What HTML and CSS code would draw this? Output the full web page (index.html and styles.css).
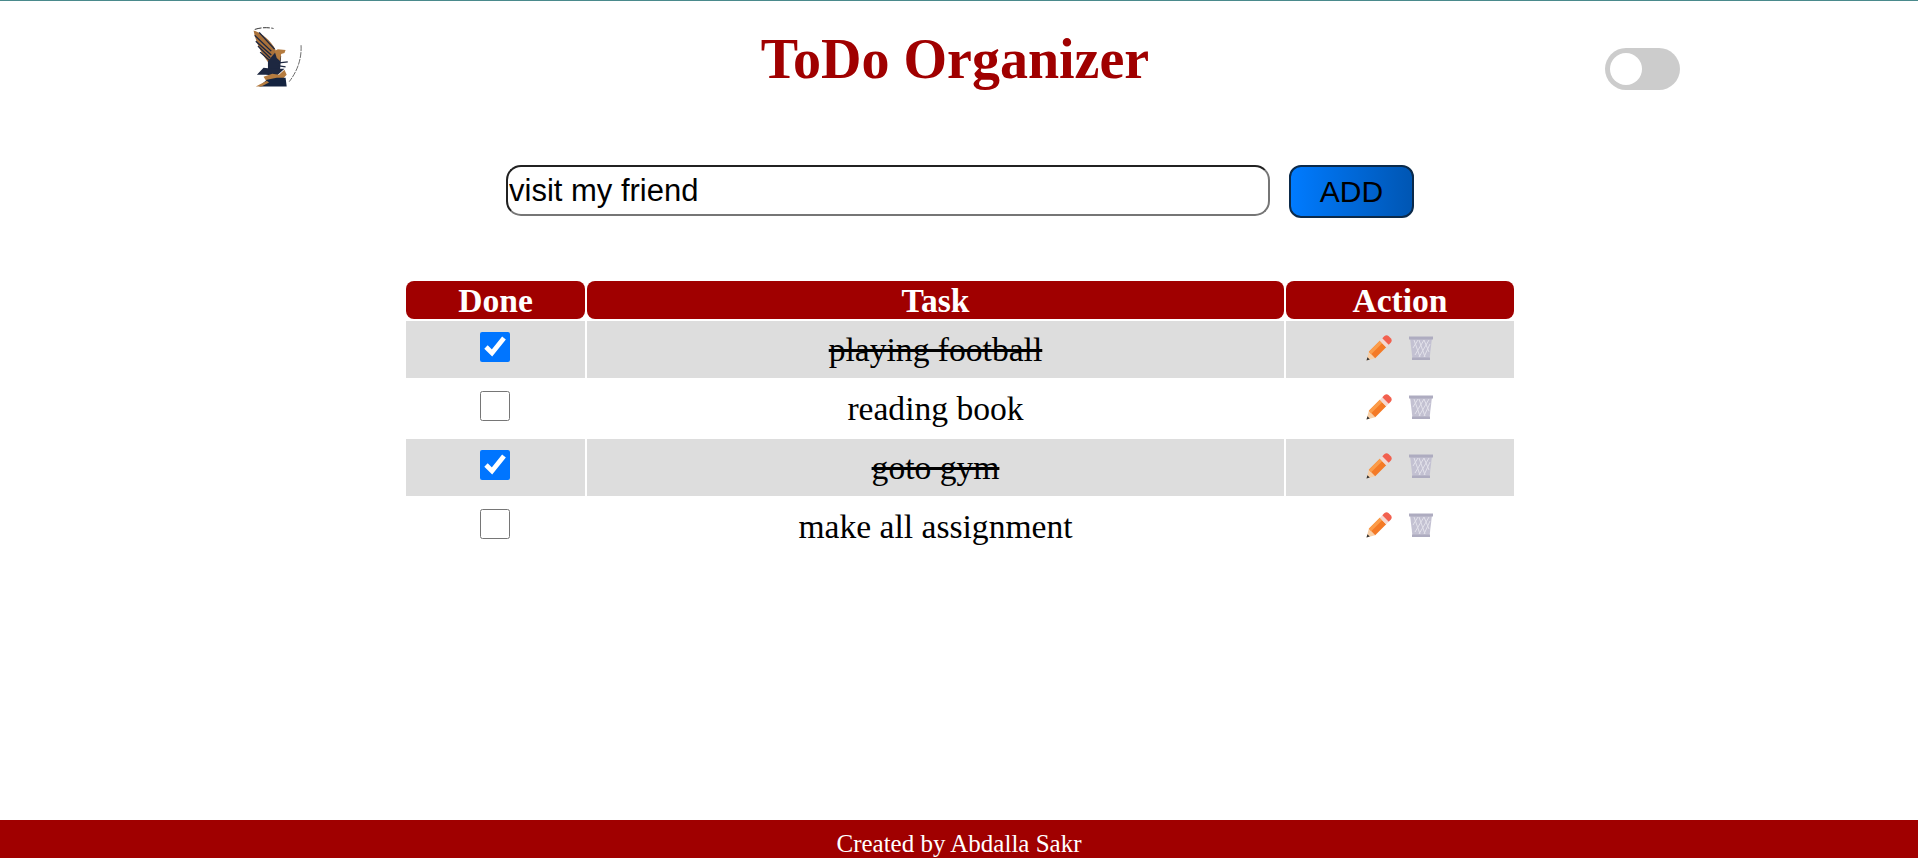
FILE: index.html
```html
<!DOCTYPE html>
<html lang="en">
<head>
    <meta charset="UTF-8">
    <meta name="viewport" content="width=device-width, initial-scale=1.0">
    <title>ToDo Organizer</title>
    <link rel="stylesheet" href="styles.css">
</head>
<body>
    <svg width="0" height="0" class="defs">
        <symbol id="pencil" viewBox="0 0 26 26">
            <path d="M.5 25.500 L2.800 16.800 L9.200 23.200 Z" fill="#f8cfa6"/>
            <path d="M.5 25.500 L1.400 22.200 L3.800 24.600 Z" fill="#333"/>
            <path d="M2.800 16.800 L13.800 5.800 L20.200 12.200 L9.200 23.200 Z" fill="#f47a26"/>
            <path d="M2.800 16.800 L13.800 5.800 L16.200 8.200 L5.200 19.200 Z" fill="#fb9c4a"/>
            <path d="M13.800 5.800 L16.300 3.300 L22.700 9.700 L20.200 12.200 Z" fill="#f4d8d2"/>
            <path d="M16.300 3.300 L18.500 1.100 Q20.500 -.4 22.500 1 L25 3.500 Q26.400 5.500 24.900 7.500 L22.700 9.700 Z" fill="#f2604f"/>
        </symbol>
        <symbol id="trash" viewBox="0 0 26 26">
            <path d="M2 3 L24 3 L21.500 24 L4.500 24 Z" fill="#c3c1d2"/>
            <path d="M6 5 L12 22 M11 5 L17 22 M16 5 L21 17 M21 5 L11 22 M16 5 L7 20 M10 5 L5 13 M22 9 L16 22" stroke="#e2e1ea" stroke-width="1" fill="none"/>
            <path d="M1 1.500 H25 V4.500 H1 Z" fill="#aeacc0"/>
            <path d="M4 22.500 H22 V25 H4 Z" fill="#aeacc0"/>
        </symbol>
    </svg>

    <header class="top">
        <svg class="logo" viewBox="0 0 66 66" role="img" aria-label="logo">
            <path d="M15 4 Q24 1 34 3" stroke="#333" stroke-width="1" fill="none" stroke-dasharray="7 1.500"/>
            <path d="M62 20 Q63 40 50 57" stroke="#444" stroke-width=".8" fill="none" stroke-dasharray="6 1"/>
            <g transform="translate(-3 0) scale(1.120 1)">
                <path d="M15 5 C22 8 30 14 35 25 L36 34 L28 37 C22 28 17 18 15 5 Z" fill="#a9713a"/>
                <path d="M16 10 L31 26 M17 16 L31 30 M19 21 L30 33 M21 27 L29 35 M20 7 L34 24" stroke="#1d2740" stroke-width="1.300" fill="none"/>
                <path d="M28 36 L35 27 L40 31 L39 45 L28 47 Z" fill="#1d2740"/>
                <path d="M34 26 L37 24 L44 25 L43 28 L40 29 L39 36 L36 33 Z" fill="#b57c40"/>
                <path d="M38 38 L46 37 M38 41 L44 42" stroke="#1d2740" stroke-width="1.200"/>
                <path d="M18 50 L24 43 L32 44 L43 44 L36 51 L26 50 Z" fill="#1d2740"/>
                <path d="M24 52 L32 49 L38 50 L43 45 L45 50 L39 57 L27 57 Z" fill="#b57c40"/>
                <path d="M27 55 L36 53 L44 53 L45 62 L20 62 Z" fill="#14233f"/>
                <path d="M17 62 L27 56 L29 58 L22 62 Z" fill="#b57c40"/>
            </g>
        </svg>
        <h1 class="title">ToDo Organizer</h1>
        <label class="switch">
            <input type="checkbox" class="switch-input">
            <span class="knob"></span>
        </label>
    </header>

    <form class="add-form">
        <input type="text" class="task-input" value="visit my friend">
        <button type="button" class="add-btn">ADD</button>
    </form>

    <table class="tasks">
        <thead>
            <tr>
                <th class="col-done">Done</th>
                <th>Task</th>
                <th class="col-action">Action</th>
            </tr>
        </thead>
        <tbody>
            <tr class="striped">
                <td><input type="checkbox" class="check" checked></td>
                <td class="finished">playing football</td>
                <td><svg class="icon"><use href="#pencil"/></svg><svg class="icon"><use href="#trash"/></svg></td>
            </tr>
            <tr>
                <td><input type="checkbox" class="check"></td>
                <td>reading book</td>
                <td><svg class="icon"><use href="#pencil"/></svg><svg class="icon"><use href="#trash"/></svg></td>
            </tr>
            <tr class="striped">
                <td><input type="checkbox" class="check" checked></td>
                <td class="finished">goto gym</td>
                <td><svg class="icon"><use href="#pencil"/></svg><svg class="icon"><use href="#trash"/></svg></td>
            </tr>
            <tr>
                <td><input type="checkbox" class="check"></td>
                <td>make all assignment</td>
                <td><svg class="icon"><use href="#pencil"/></svg><svg class="icon"><use href="#trash"/></svg></td>
            </tr>
        </tbody>
    </table>

    <footer class="foot">Created by Abdalla Sakr</footer>
</body>
</html>
```

FILE: styles.css
```css
html, body {
    height: 100%;
}
body {
    margin: 0;
    box-sizing: border-box;
    display: flex;
    flex-direction: column;
    border-top: 1px solid #4a8a8c;
    background-color: #fff;
    font-family: "Liberation Serif", serif;
    overflow: hidden;
}
.defs {
    display: none;
}
.top {
    display: flex;
    justify-content: space-between;
    align-items: flex-start;
    padding: 24px 238px 0 240px;
}
.logo {
    width: 65px;
    height: 66px;
}
.title {
    margin: 0;
    color: #a00000;
    font-size: 56px;
    line-height: 68px;
    font-weight: bold;
}
.switch {
    position: relative;
    display: block;
    width: 75px;
    height: 42px;
    margin-top: 23px;
    border-radius: 21px;
    background-color: #ccc;
}
.switch-input {
    display: none;
}
.knob {
    position: absolute;
    left: 5px;
    top: 5px;
    width: 32px;
    height: 32px;
    border-radius: 50%;
    background-color: #fff;
}
.add-form {
    display: flex;
    justify-content: center;
    gap: 19px;
    margin-top: 72px;
    padding-left: 2px;
}
.task-input {
    box-sizing: border-box;
    width: 764px;
    height: 51px;
    padding: 0 0 0 1px;
    border: 2px inset #767676;
    border-radius: 15px;
    font-family: "Liberation Sans", sans-serif;
    font-size: 31px;
}
.add-btn {
    box-sizing: border-box;
    width: 125px;
    height: 53px;
    border: 2px solid #0b2a4a;
    border-radius: 12px;
    background: linear-gradient(to right, #007bff, #0056b3);
    color: #000;
    font-family: "Liberation Sans", sans-serif;
    font-size: 30px;
}
.tasks {
    width: 1112px;
    margin: 61px 0 0 404px;
    border-spacing: 2px;
    font-size: 33.6px;
    text-align: center;
}
.tasks th {
    height: 36px;
    padding: 2px 0 0;
    border-radius: 8px;
    background-color: #a00000;
    color: #fff;
    font-size: 33.6px;
    line-height: 36px;
}
.col-done {
    width: 179px;
}
.col-action {
    width: 228px;
}
.tasks td {
    height: 57px;
    padding: 0;
}
.striped td {
    background-color: #ddd;
}
.finished {
    text-decoration: line-through;
}
.check {
    width: 30px;
    height: 30px;
    margin: 0 2px 8px 0;
    vertical-align: middle;
}
.icon {
    width: 26px;
    height: 26px;
    margin: 0 8px 8px;
    vertical-align: middle;
}
.foot {
    margin-top: auto;
    height: 38px;
    background-color: #a00000;
    color: #fff;
    font-size: 25px;
    line-height: 48px;
    text-align: center;
    overflow: hidden;
}
```
